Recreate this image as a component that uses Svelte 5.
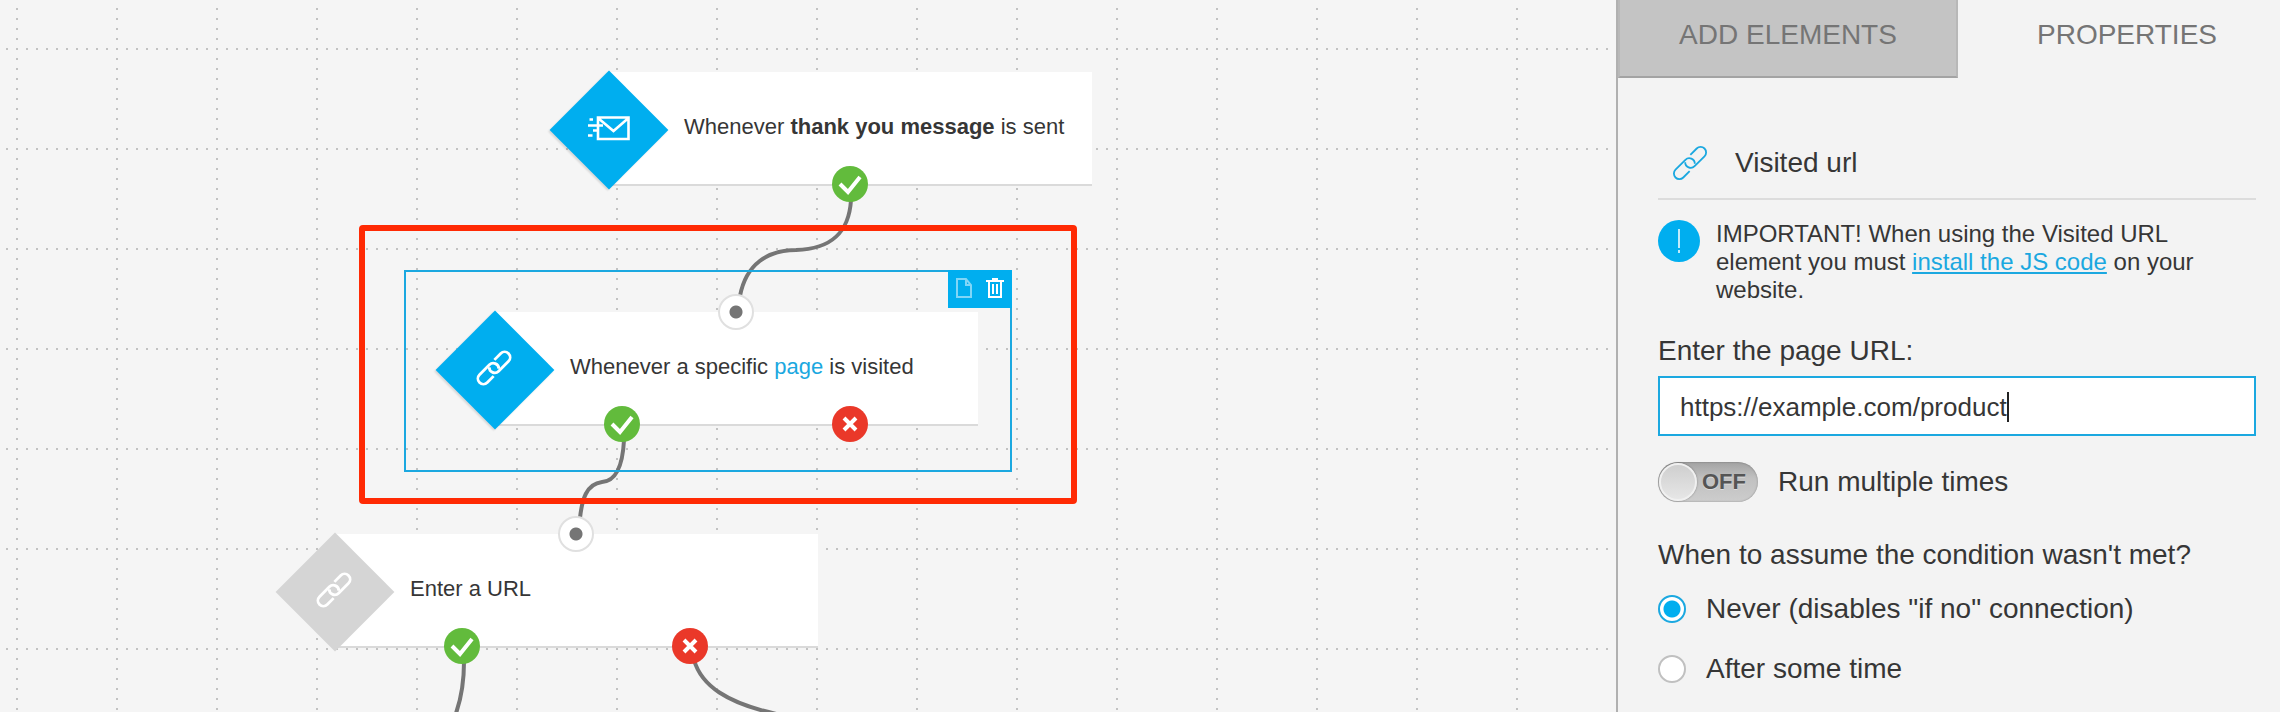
<script lang="ts">
  type Port = { kind: 'in' | 'yes' | 'no'; x: number }
  type FlowNode = {
    id: string
    x: number
    y: number
    icon: 'mail' | 'link'
    muted?: boolean
    selected?: boolean
    parts: { text: string; bold?: boolean; link?: boolean }[]
    ports: Port[]
  }

  let nodes: FlowNode[] = [
    {
      id: 'thank-you',
      x: 550,
      y: 72,
      icon: 'mail',
      parts: [{ text: 'Whenever ' }, { text: 'thank you message', bold: true }, { text: ' is sent' }],
      ports: [{ kind: 'yes', x: 300 }],
    },
    {
      id: 'visited',
      x: 436,
      y: 312,
      icon: 'link',
      selected: true,
      parts: [{ text: 'Whenever a specific ' }, { text: 'page', link: true }, { text: ' is visited' }],
      ports: [
        { kind: 'in', x: 300 },
        { kind: 'yes', x: 186 },
        { kind: 'no', x: 414 },
      ],
    },
    {
      id: 'enter-url',
      x: 276,
      y: 534,
      icon: 'link',
      muted: true,
      parts: [{ text: 'Enter a URL' }],
      ports: [
        { kind: 'in', x: 300 },
        { kind: 'yes', x: 186 },
        { kind: 'no', x: 414 },
      ],
    },
  ]

  let connections = [
    'M851 200C849 232 832 249 796 250C768 250 746 264 740 296',
    'M624 440C623 460 618 481 602 482C586 484 582 500 580 518',
    'M464 662C464 684 461 700 455 716',
    'M694 660C701 684 724 704 786 716',
  ]

  let tab = $state('properties')
  let url = $state('https://example.com/product')
  let multiple = $state(false)
  let condition = $state('never')

  let field: HTMLInputElement
  let caret = $state(0)

  // the caret sits after the last typed character
  $effect(() => {
    let ctx = document.createElement('canvas').getContext('2d')!
    ctx.font = getComputedStyle(field).font
    caret = Math.round(ctx.measureText(url).width)
  })
</script>

{#snippet linkIcon(stroke: number)}
  <svg width="40" height="40" viewBox="-20 -20 40 40" fill="none" stroke="currentColor" stroke-width={stroke} aria-hidden="true">
    <g transform="rotate(-45)">
      <path d="M6-5.5H15A5.5 5.5 0 0 1 15 5.5H1A5.5 5.5 0 0 1-2.9-3.9" />
      <path d="M-6 5.5H-15A5.5 5.5 0 0 1-15-5.5H-1A5.5 5.5 0 0 1 2.9 3.9" />
    </g>
  </svg>
{/snippet}

<div class="editor">
  <main class="canvas">
    <svg class="wires" aria-hidden="true">
      {#each connections as d}
        <path {d} />
      {/each}
    </svg>

    {#each nodes as node (node.id)}
      <div class="node" style="left: {node.x}px; top: {node.y}px">
        {#if node.selected}
          <div class="selection">
            <div class="tools">
              <button class="tool copy" aria-label="Duplicate">
                <svg width="16" height="20" viewBox="0 0 16 20" fill="none" stroke="currentColor" stroke-width="2">
                  <path d="M1 1h9l5 6v12H1zM10 1v6h5" />
                </svg>
              </button>
              <button class="tool" aria-label="Delete">
                <svg width="18" height="20" viewBox="0 0 18 20" fill="none" stroke="currentColor" stroke-width="2">
                  <path d="M0 3h18M6 1h6M3 3v16h12V3M7 6v10M11 6v10" />
                </svg>
              </button>
            </div>
          </div>
        {/if}
        <div class="card">
          <p>
            {#each node.parts as part}{#if part.bold}<b>{part.text}</b>{:else if part.link}<a href="#page">{part.text}</a>{:else}{part.text}{/if}{/each}
          </p>
        </div>
        <div class="diamond" class:muted={node.muted}></div>
        <span class="icon">
          {#if node.icon === 'mail'}
            <svg width="44" height="26" viewBox="0 0 44 26" fill="none" stroke="currentColor" stroke-width="2.6" aria-hidden="true">
              <path d="M12 2.5h30.5v21.500H12zM12 3l15.500 13L42.500 3M3.500 4.500h3.500M2 10.500h15M7 15.500h5M2 20.500h4.500" />
            </svg>
          {:else}
            {@render linkIcon(2.8)}
          {/if}
        </span>
        {#each node.ports as port}
          <span class="port {port.kind}" style="left: {port.x}px">
            {#if port.kind === 'yes'}
              <svg width="36" height="36" viewBox="0 0 36 36"><path d="M8 18l8 8 12-15" fill="none" stroke="#fff" stroke-width="4" /></svg>
            {:else if port.kind === 'no'}
              <svg width="36" height="36" viewBox="0 0 36 36"><path d="M12 12l12 12M24 12L12 24" fill="none" stroke="#fff" stroke-width="4" /></svg>
            {/if}
          </span>
        {/each}
      </div>
    {/each}

    <div class="highlight"></div>
  </main>

  <aside class="panel">
    <div class="tabs" role="tablist">
      <button role="tab" aria-selected={tab === 'elements'} class:active={tab === 'elements'} onclick={() => (tab = 'elements')}>ADD ELEMENTS</button>
      <button role="tab" aria-selected={tab === 'properties'} class:active={tab === 'properties'} onclick={() => (tab = 'properties')}>PROPERTIES</button>
    </div>

    <div class="content">
      <h2>{@render linkIcon(1.8)}Visited url</h2>

      <div class="notice">
        <span class="info">
          <svg width="42" height="42" viewBox="0 0 42 42" aria-hidden="true"><path d="M21 9v19M21 30v3" stroke="#fff" stroke-width="1.500" /></svg>
        </span>
        <p>IMPORTANT! When using the Visited URL element you must <a href="#install">install the JS code</a> on your website.</p>
      </div>

      <label class="title" for="page-url">Enter the page URL:</label>
      <div class="field">
        <input id="page-url" type="text" bind:this={field} bind:value={url} />
        <span class="caret" style="left: {caret}px"></span>
      </div>

      <label class="switch">
        <input type="checkbox" role="switch" bind:checked={multiple} />
        <span class="track" class:on={multiple}><span class="knob"></span><span class="state">{multiple ? 'ON' : 'OFF'}</span></span>
        Run multiple times
      </label>

      <fieldset>
        <legend>When to assume the condition wasn't met?</legend>
        <label class="option"><input type="radio" name="condition" value="never" bind:group={condition} />Never (disables "if no" connection)</label>
        <label class="option"><input type="radio" name="condition" value="later" bind:group={condition} />After some time</label>
      </fieldset>
    </div>
  </aside>
</div>

<style>
  :global(body) {
    margin: 0;
    background: #f5f5f5;
  }

  .editor {
    --blue: #00aeef;
    --link: #1ba8e0;
    --text: #363636;
    display: flex;
    min-height: 100vh;
    overflow: hidden;
    font-family: 'Liberation Sans', Arial, sans-serif;
    color: var(--text);
  }

  .canvas {
    position: relative;
    flex: 1;
    min-width: 0;
    overflow: hidden;
    background-color: #f5f5f5;
    background-image:
      conic-gradient(from 270deg at 2px 2px, #c2c2c2 90deg, transparent 0),
      conic-gradient(from 270deg at 2px 2px, #c2c2c2 90deg, transparent 0);
    background-size: 10px 100px, 100px 10px;
    background-position: 6px 48px, 16px 8px;
  }

  .wires {
    position: absolute;
    inset: 0;
    width: 100%;
    height: 100%;
  }
  .wires path {
    fill: none;
    stroke: #757575;
    stroke-width: 4;
  }

  .node {
    position: absolute;
    width: 542px;
    height: 114px;
  }
  .card {
    box-sizing: border-box;
    height: 100%;
    margin-left: 60px;
    padding: 29px 24px 0 74px;
    background: #fff;
    border-bottom: 2px solid #dadada;
  }
  .card p {
    margin: 0;
    font-size: 22px;
    line-height: 52px;
    white-space: nowrap;
  }
  .card a {
    color: var(--link);
    text-decoration: none;
  }

  .diamond {
    position: absolute;
    left: 17px;
    top: 16px;
    width: 84px;
    height: 84px;
    background: var(--blue);
    box-shadow: 0 2px 2px rgba(0, 0, 0, 0.12);
    transform: rotate(45deg);
  }
  .diamond.muted {
    background: #d5d5d5;
    box-shadow: none;
  }
  .icon {
    position: absolute;
    left: 0;
    top: -2px;
    display: grid;
    place-items: center;
    width: 116px;
    height: 116px;
    color: #fff;
  }

  .port {
    position: absolute;
    box-sizing: border-box;
    width: 36px;
    height: 36px;
    margin-left: -18px;
    border-radius: 50%;
  }
  .port svg {
    display: block;
  }
  .port.in {
    top: -18px;
    border: 2px solid #e0e0e0;
    background: radial-gradient(circle, #757575 6px, #fff 7px);
  }
  .port.yes {
    top: 94px;
    background: #62bb3c;
  }
  .port.no {
    top: 94px;
    background: #ea3829;
  }

  .selection {
    position: absolute;
    inset: -42px -34px -46px -32px;
    border: 2px solid var(--link);
  }
  .tools {
    position: absolute;
    top: -2px;
    right: -2px;
    box-sizing: border-box;
    display: flex;
    width: 64px;
    height: 38px;
    padding: 0 2px 2px 0;
    background: var(--blue);
  }
  .tool {
    display: grid;
    flex: 1;
    place-items: center;
    padding: 0;
    border: 0;
    background: none;
    color: #fff;
    cursor: pointer;
  }
  .tool.copy {
    opacity: 0.5;
  }

  .highlight {
    position: absolute;
    left: 359px;
    top: 225px;
    box-sizing: border-box;
    width: 718px;
    height: 279px;
    border: 6px solid #ff2a04;
    border-radius: 4px;
    pointer-events: none;
  }

  .panel {
    box-sizing: border-box;
    width: 664px;
    flex-shrink: 0;
    border-left: 2px solid #b0b0b0;
    background: #f3f3f3;
  }

  .tabs {
    display: flex;
  }
  .tabs button {
    box-sizing: border-box;
    flex: none;
    width: 340px;
    height: 78px;
    padding: 0 0 6px;
    border: 2px solid #b8b8b8;
    border-top: 0;
    border-bottom-color: #a3a3a3;
    background: #c4c4c4;
    color: #757575;
    font: inherit;
    font-size: 28px;
    cursor: pointer;
  }
  .tabs button.active {
    flex: 1;
    padding-left: 16px;
    border-color: transparent;
    background: none;
  }

  .content {
    padding: 65px 24px 0 40px;
    font-size: 28px;
    line-height: 40px;
  }

  h2 {
    display: flex;
    align-items: center;
    gap: 25px;
    margin: 0;
    padding: 0 0 15px 12px;
    border-bottom: 2px solid #dcdcdc;
    font-size: 28px;
    font-weight: 400;
  }
  h2 svg {
    color: var(--link);
  }

  .notice {
    display: flex;
    gap: 16px;
    margin-top: 20px;
  }
  .notice p {
    margin: 0;
    padding-right: 24px;
    font-size: 24px;
    line-height: 28px;
  }
  .notice a {
    color: var(--link);
  }
  .info {
    flex-shrink: 0;
    width: 42px;
    height: 42px;
    border-radius: 50%;
    background: var(--blue);
  }

  .title {
    display: block;
    margin-top: 27px;
  }
  .field {
    position: relative;
    box-sizing: border-box;
    height: 60px;
    margin-top: 5px;
    padding: 2px 20px 0;
    border: 2px solid var(--link);
    background: #fff;
  }
  .field input {
    box-sizing: border-box;
    display: block;
    width: 100%;
    height: 100%;
    padding: 0;
    border: 0;
    outline: 0;
    background: none;
    color: var(--text);
    caret-color: transparent;
    font: inherit;
    font-size: 26px;
  }
  .caret {
    position: absolute;
    top: 14px;
    width: 2px;
    height: 30px;
    margin-left: 20px;
    background: #222;
    pointer-events: none;
  }

  .switch {
    display: flex;
    align-items: center;
    gap: 20px;
    margin-top: 26px;
  }
  .switch input {
    position: absolute;
    opacity: 0;
  }
  .track {
    box-sizing: border-box;
    display: flex;
    align-items: center;
    gap: 5px;
    width: 100px;
    height: 40px;
    border-radius: 20px;
    background: linear-gradient(#a2a2a2, #c0c0c0 40%, #cdcdcd);
    box-shadow: inset 0 0 2px rgba(0, 0, 0, 0.35);
  }
  .track.on {
    flex-direction: row-reverse;
  }
  .knob {
    box-sizing: border-box;
    width: 38px;
    height: 38px;
    margin-left: 1px;
    border: 2px solid #f0f0f0;
    border-radius: 50%;
    background: linear-gradient(#cfcfcf, #e6e6e6);
    box-shadow: 0 0 2px rgba(0, 0, 0, 0.4);
  }
  .state {
    color: #555;
    font-size: 22px;
    font-weight: 700;
    text-shadow: 0 1px 0 #ddd;
  }

  fieldset {
    margin: 33px 0 0;
    padding: 0;
    border: 0;
  }
  legend {
    padding: 0;
  }
  .option {
    display: flex;
    align-items: center;
    gap: 20px;
    margin-top: 14px;
  }
  .option + .option {
    margin-top: 20px;
  }
  .option input {
    appearance: none;
    box-sizing: border-box;
    width: 28px;
    height: 28px;
    margin: 0;
    border: 2px solid #c0c0c0;
    border-radius: 50%;
    background: #fff;
  }
  .option input:checked {
    border-color: var(--link);
    background: radial-gradient(circle, var(--blue) 8px, #fff 9px);
  }
</style>
